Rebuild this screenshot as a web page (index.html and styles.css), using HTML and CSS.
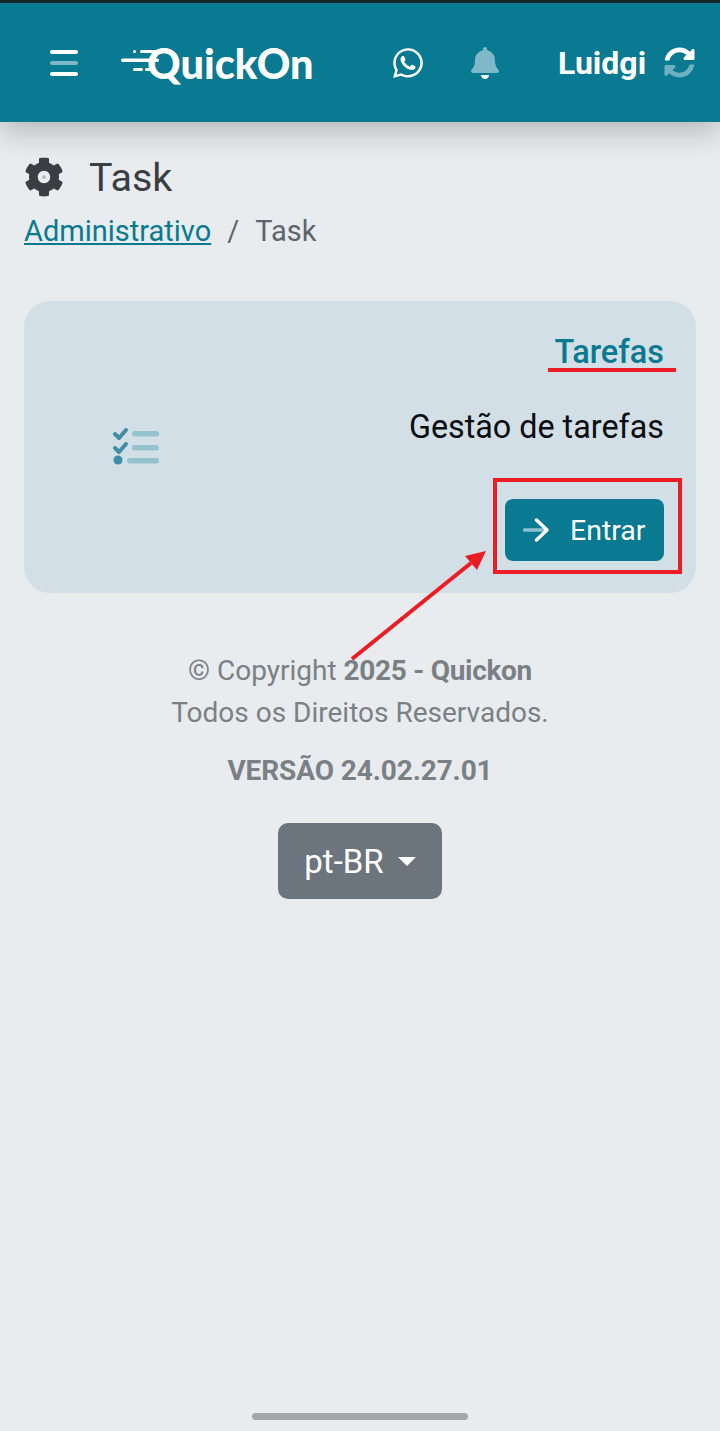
FILE: index.html
```html
<!DOCTYPE html>
<html lang="en">
<head>
    <meta charset="UTF-8">
    <meta name="viewport" content="width=device-width, initial-scale=1.0">
    <title>QuickOn - Task</title>
    <link rel="stylesheet" href="styles.css">
</head>
<body>
    <header class="top-bar">
        <button class="menu-btn" type="button" aria-label="Menu">
            <span class="menu-line"></span>
            <span class="menu-line menu-line-dim"></span>
            <span class="menu-line"></span>
        </button>
        <div class="logo">
            <svg class="logo-speed" width="38" height="24" viewBox="0 0 38 24">
                <rect x="12" y="0" width="3" height="3" rx="1.5" fill="#fff"/>
                <rect x="19" y="0" width="19" height="3" rx="1.5" fill="#fff"/>
                <rect x="0" y="8.500" width="38" height="3.500" rx="1.700" fill="#fff"/>
                <rect x="12" y="18" width="10" height="3" rx="1.500" fill="#fff"/>
                <rect x="24" y="18" width="10" height="3" rx="1.500" fill="#fff"/>
            </svg>
            <span class="logo-text">QuickOn</span>
        </div>
        <svg class="icon-whatsapp" width="30" height="34" viewBox="0 0 448 512">
            <path fill="#fff" d="M380.900 97.100C339 55.100 283.200 32 223.900 32c-122.400 0-222 99.600-222 222 0 39.100 10.200 77.300 29.600 111L0 480l117.700-30.900c32.400 17.700 68.900 27 106.100 27h.1c122.300 0 224.100-99.600 224.100-222 0-59.300-25.200-115-67.100-157zm-157 341.600c-33.200 0-65.700-8.900-94-25.700l-6.700-4-69.800 18.300L72 359.200l-4.400-7c-18.500-29.400-28.200-63.300-28.200-98.200 0-101.700 82.800-184.500 184.600-184.500 49.300 0 95.600 19.200 130.400 54.100 34.800 34.900 56.200 81.200 56.100 130.500 0 101.800-84.900 184.600-186.600 184.600zm101.200-138.200c-5.500-2.800-32.800-16.200-37.900-18-5.100-1.900-8.800-2.800-12.500 2.800-3.700 5.600-14.300 18-17.600 21.800-3.200 3.700-6.500 4.200-12 1.400-32.600-16.300-54-29.100-75.500-66-5.700-9.800 5.700-9.100 16.300-30.300 1.800-3.700.9-6.900-.5-9.700-1.400-2.800-12.500-30.100-17.100-41.200-4.500-10.800-9.100-9.300-12.500-9.500-3.200-.2-6.900-.2-10.600-.2-3.700 0-9.700 1.400-14.800 6.900-5.100 5.600-19.400 19-19.400 46.300 0 27.300 19.900 53.700 22.600 57.400 2.800 3.700 39.100 59.700 94.800 83.800 35.200 15.200 49 16.500 66.600 13.900 10.700-1.600 32.800-13.400 37.400-26.400 4.600-13 4.600-24.100 3.200-26.400-1.300-2.500-5-3.900-10.500-6.600z"/>
        </svg>
        <svg class="icon-bell" width="28" height="32" viewBox="0 0 448 512">
            <path fill="#7fb9c8" d="M439.390 362.290c-19.320-20.760-55.470-51.990-55.470-154.290 0-77.700-54.480-139.900-127.940-155.160V32c0-17.670-14.320-32-31.980-32s-31.980 14.330-31.980 32v20.840C118.560 68.100 64.080 130.300 64.080 208c0 102.300-36.150 133.530-55.470 154.290-6 6.450-8.660 14.160-8.610 21.710.110 16.400 12.980 32 32.100 32h383.800c19.120 0 32-15.600 32.100-32 .050-7.550-2.610-15.270-8.610-21.710z"/>
            <path fill="#fff" d="M224 512c35.320 0 63.970-28.650 63.970-64H160.030c0 35.350 28.650 64 63.970 64z"/>
        </svg>
        <span class="user-name">Luidgi</span>
        <svg class="icon-sync" width="31" height="31" viewBox="0 0 512 512">
            <path fill="#fff" d="M370.720 133.280C339.458 104.008 298.888 87.962 255.848 88c-77.458.068-144.328 53.178-162.791 126.850-1.344 5.363-6.122 9.150-11.651 9.150H24.103c-7.498 0-13.194-6.807-11.807-14.176C33.933 94.924 134.813 8 256 8c66.448 0 126.791 26.136 171.315 68.685L463.030 40.970C478.149 25.851 504 36.559 504 57.941V192c0 13.255-10.745 24-24 24H345.941c-21.382 0-32.090-25.851-16.971-40.971l41.750-41.749z"/>
            <path fill="#6fb0c1" d="M32 296h134.059c21.382 0 32.090 25.851 16.971 40.971l-41.750 41.750c31.262 29.273 71.835 45.319 114.876 45.280 77.418-.070 144.315-53.144 162.787-126.849 1.344-5.363 6.122-9.150 11.651-9.150h57.304c7.498 0 13.194 6.807 11.807 14.176C478.067 417.076 377.187 504 256 504c-66.448 0-126.791-26.136-171.315-68.685L48.970 471.030C33.851 486.149 8 475.441 8 454.059V320c0-13.255 10.745-24 24-24z"/>
        </svg>
    </header>

    <main class="content">
        <div class="page-title">
            <svg class="icon-gear" width="40" height="40" viewBox="0 0 512 512">
                <path fill="#3a3d42" d="M487.400 315.700l-42.600-24.600c4.300-23.200 4.300-47 0-70.200l42.600-24.600c4.900-2.800 7.100-8.600 5.500-14-11.100-35.600-30-67.800-54.700-94.600-3.800-4.100-10-5.100-14.800-2.300L380.800 110c-17.900-15.400-38.500-27.300-60.800-35.100V25.800c0-5.600-3.900-10.500-9.400-11.700-36.700-8.200-74.300-7.800-109.200 0-5.500 1.200-9.400 6.100-9.400 11.700V75c-22.200 7.900-42.800 19.800-60.800 35.100L88.700 85.500c-4.900-2.800-11-1.900-14.800 2.300-24.700 26.700-43.600 58.900-54.700 94.600-1.700 5.400.6 11.200 5.500 14L67.300 221c-4.300 23.200-4.300 47 0 70.200l-42.600 24.600c-4.900 2.800-7.100 8.600-5.500 14 11.100 35.600 30 67.800 54.700 94.600 3.800 4.100 10 5.100 14.800 2.300l42.600-24.600c17.900 15.400 38.500 27.300 60.800 35.100v49.200c0 5.600 3.900 10.500 9.400 11.700 36.700 8.200 74.300 7.800 109.200 0 5.500-1.200 9.400-6.100 9.400-11.700v-49.200c22.200-7.900 42.800-19.800 60.800-35.100l42.600 24.600c4.900 2.800 11 1.900 14.800-2.300 24.700-26.700 43.600-58.900 54.700-94.600 1.500-5.500-.7-11.300-5.600-14.100zM256 336c-44.100 0-80-35.900-80-80s35.900-80 80-80 80 35.900 80 80-35.900 80-80 80z"/>
                <circle cx="256" cy="256" r="24" fill="#b4b8bc"/>
            </svg>
            <h1>Task</h1>
        </div>
        <nav class="breadcrumb">
            <a href="#">Administrativo</a>
            <span class="sep">/</span>
            <span>Task</span>
        </nav>

        <section class="card">
            <div class="card-icon">
                <svg width="48" height="40" viewBox="0 0 48 40">
                    <path d="M3 7l4 4 7-8M3 21l4 4 7-8" fill="none" stroke="#3f8ea4" stroke-width="4" stroke-linecap="round" stroke-linejoin="round"/>
                    <circle cx="6" cy="33" r="4.500" fill="#3f8ea4"/>
                    <rect x="20" y="4" width="27" height="5.500" rx="2.700" fill="#94c2cf"/>
                    <rect x="20" y="18" width="27" height="5.500" rx="2.700" fill="#94c2cf"/>
                    <rect x="15" y="31" width="32" height="5.500" rx="2.700" fill="#94c2cf"/>
                </svg>
            </div>
            <div class="card-body">
                <h2 class="card-title">Tarefas</h2>
                <p class="card-text">Gestão de tarefas</p>
                <a class="btn-enter" href="#">
                    <svg width="26" height="24" viewBox="0 0 26 24">
                        <path d="M1.500 12h22" stroke="#8cc0ce" stroke-width="3.400" stroke-linecap="round"/>
                        <path d="M13.500 2l10.500 10-10.500 10" fill="none" stroke="#fff" stroke-width="3.400" stroke-linecap="round" stroke-linejoin="round"/>
                    </svg>
                    <span>Entrar</span>
                </a>
            </div>
        </section>

        <footer class="page-footer">
            <p class="copyright">© Copyright <strong>2025 - Quickon</strong></p>
            <p class="copyright">Todos os Direitos Reservados.</p>
            <p class="version">VERSÃO 24.02.27.01</p>
            <button class="lang-btn" type="button">pt-BR<span class="caret"></span></button>
        </footer>
    </main>

    <div class="home-bar"></div>

    <!-- marcacoes vermelhas por cima do print -->
    <div class="mark-underline"></div>
    <div class="mark-box"></div>
    <svg class="mark-arrow" width="150" height="190" viewBox="0 0 150 190">
        <path d="M3 176L122 80" stroke="#ec1c24" stroke-width="4"/>
        <path d="M137 68L116 73 128 87z" fill="#ec1c24"/>
    </svg>
</body>
</html>
```

FILE: styles.css
```css
html, body {
    margin: 0;
    padding: 0;
}

body {
    position: relative;
    width: 720px;
    height: 1431px;
    overflow: hidden;
    font-family: Roboto, "Liberation Sans", sans-serif;
    background: #e8ecef;
    color: #3a3d42;
}

.top-bar {
    display: flex;
    align-items: center;
    height: 119px;
    border-top: 3px solid #14262d;
    background: #0a7992;
    box-shadow: 0 10px 28px rgba(0, 0, 0, 0.22);
    color: #fff;
}

.menu-btn {
    display: flex;
    flex-direction: column;
    gap: 7px;
    width: 28px;
    margin-left: 50px;
    padding: 0;
    border: none;
    background: none;
}

.menu-line {
    display: block;
    height: 4px;
    border-radius: 2px;
    background: #fff;
}

.menu-line-dim {
    background: #7fb9c8;
}

.logo {
    position: relative;
    display: flex;
    align-items: center;
    width: 193px;
    margin-left: 43px;
}

.logo-speed {
    position: absolute;
    left: 0;
    top: 9px;
}

.logo-text {
    position: relative;
    margin-left: 26px;
    font-family: Lato, sans-serif;
    font-size: 41.5px;
    font-weight: 900;
    line-height: 44px;
}

.icon-whatsapp {
    margin-left: 79px;
}

.icon-bell {
    margin-left: 48px;
}

.user-name {
    margin-left: 59px;
    font-size: 32px;
    font-weight: 700;
}

.icon-sync {
    margin-left: 18px;
}

.content {
    padding: 0 24px;
}

.page-title {
    display: flex;
    align-items: center;
    gap: 25px;
    margin-top: 33px;
    height: 44px;
}

.page-title h1 {
    margin: 0;
    font-size: 39.5px;
    font-weight: 400;
}

.breadcrumb {
    display: flex;
    gap: 16px;
    margin-top: 15px;
    font-size: 29px;
    line-height: 34px;
    color: #5f656b;
}

.breadcrumb a {
    color: #0a7992;
}

.card {
    display: flex;
    justify-content: space-between;
    height: 292px;
    margin-top: 53px;
    padding: 0 32px;
    box-sizing: border-box;
    border-radius: 26px;
    background: #d2dfe6;
}

.card-icon {
    display: flex;
    align-items: center;
    width: 160px;
    padding-left: 56px;
    padding-bottom: 1px;
    box-sizing: border-box;
}

.card-body {
    display: flex;
    flex-direction: column;
    align-items: flex-end;
}

.card-title {
    margin: 33px 0 0;
    font-size: 32.5px;
    font-weight: 500;
    line-height: 36px;
    color: #0a7992;
}

.card-text {
    margin: 39px 0 0;
    font-size: 32.3px;
    line-height: 36px;
    color: #0b0d10;
}

.btn-enter {
    display: flex;
    align-items: center;
    gap: 21px;
    width: 159px;
    height: 62px;
    margin-top: 54px;
    padding-left: 18px;
    box-sizing: border-box;
    border-radius: 8px;
    background: #0a7992;
    color: #fff;
    font-size: 28.5px;
    text-decoration: none;
}

.page-footer {
    margin-top: 57px;
    text-align: center;
    font-size: 28px;
    color: #7b8085;
}

.copyright {
    margin: 0;
    line-height: 42px;
}

.copyright strong {
    letter-spacing: -0.3px;
}

.version {
    margin: 16px 0 0;
    font-size: 28px;
    font-weight: 700;
    letter-spacing: -0.1px;
    line-height: 41px;
}

.lang-btn {
    display: inline-flex;
    align-items: center;
    justify-content: center;
    gap: 14px;
    width: 164px;
    height: 76px;
    margin-top: 32px;
    border: none;
    border-radius: 10px;
    background: #6c757d;
    color: #fff;
    font-family: inherit;
    font-size: 33px;
}

.caret {
    width: 0;
    height: 0;
    border-left: 9px solid transparent;
    border-right: 9px solid transparent;
    border-top: 9px solid #fff;
}

.home-bar {
    position: absolute;
    left: 252px;
    top: 1413px;
    width: 216px;
    height: 7px;
    border-radius: 4px;
    background: #a4a6aa;
}

.mark-underline {
    position: absolute;
    left: 548px;
    top: 368px;
    width: 128px;
    height: 4px;
    background: #ec1c24;
}

.mark-box {
    position: absolute;
    left: 493px;
    top: 478px;
    width: 189px;
    height: 96px;
    box-sizing: border-box;
    border: 4px solid #ec1c24;
}

.mark-arrow {
    position: absolute;
    left: 349px;
    top: 483px;
}
```
